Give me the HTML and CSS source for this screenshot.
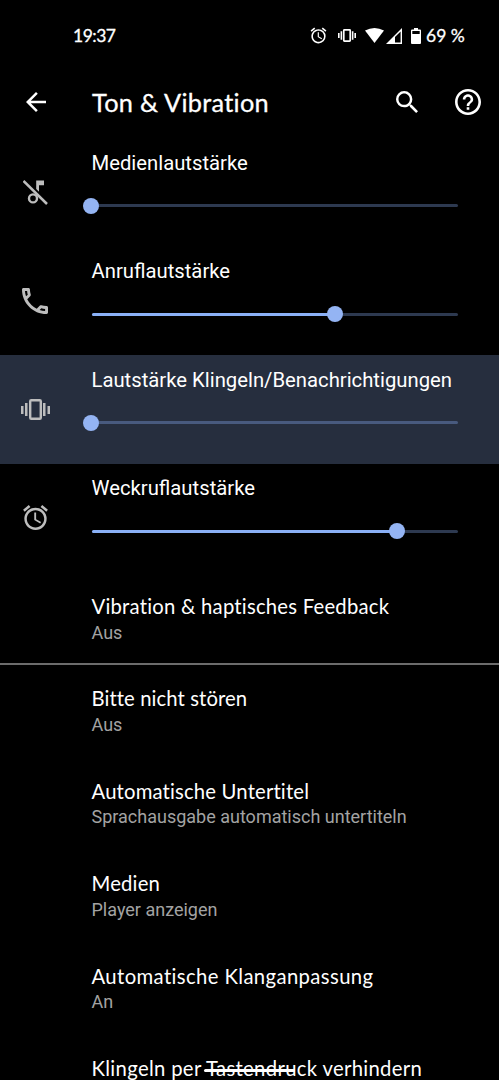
FILE: index.html
```html
<!DOCTYPE html>
<html lang="de">
<head>
<meta charset="utf-8">
<title>Ton &amp; Vibration</title>
<link rel="stylesheet" href="styles.css">
</head>
<body>
<div class="screen">
  <header class="status">
    <span class="clock">19:37</span>
    <div class="indicators">
      <svg class="st-alarm" viewBox="0 0 24 24"><path d="M22 5.72l-4.6-3.86-1.29 1.53 4.6 3.86L22 5.72zM7.88 3.39L6.6 1.86 2 5.71l1.29 1.53 4.59-3.85zM12.5 8H11v6l4.75 2.85.75-1.23-4-2.37V8zM12 4c-4.97 0-9 4.03-9 9s4.02 9 9 9a9 9 0 0 0 0-18zm0 16c-3.87 0-7-3.13-7-7s3.13-7 7-7 7 3.13 7 7-3.13 7-7 7z"/></svg>
      <svg class="st-vib" viewBox="0 0 28 20"><path d="M0 6h2.500v8H0zM4 3.500h2.500v13H4zM21.500 3.500H24v13h-2.500zM25.500 6H28v8h-2.500z"/><rect x="9" y="1.200" width="10" height="17.600" rx="1" fill="none" stroke="#fff" stroke-width="2.600"/></svg>
      <svg class="st-wifi" viewBox="0 0 19 15"><path d="M0 2.600Q9.500-2.600 19 2.600L9.500 15z"/></svg>
      <svg class="st-cell" viewBox="0 0 16 16"><path fill-rule="evenodd" d="M16 0v16H0zM14.600 3.400L9 9v5.600h5.600z"/></svg>
      <svg class="st-batt" viewBox="0 0 10 16"><path fill-rule="evenodd" d="M3 0h4v1.500h2q1 0 1 1V15q0 1-1 1H1q-1 0-1-1V2.500q0-1 1-1h2zM1.300 3v3h7.400V3z"/></svg>
      <span class="percent">69 %</span>
    </div>
  </header>
  <nav class="bar">
    <svg class="back" viewBox="4 4 16 16"><path d="M20 11H7.830l5.590-5.590L12 4l-8 8 8 8 1.410-1.410L7.830 13H20v-2z"/></svg>
    <h1 class="heading">Ton &amp; Vibration</h1>
    <svg class="search" viewBox="3 3 17.490 17.490"><path d="M15.500 14h-.79l-.28-.27A6.471 6.471 0 0 0 16 9.500 6.500 6.500 0 1 0 9.500 16c1.610 0 3.090-.59 4.230-1.570l.27.28v.79l5 4.990L20.490 19l-4.990-5zm-6 0C7.010 14 5 11.990 5 9.500S7.010 5 9.500 5 14 7.010 14 9.500 11.990 14 9.500 14z"/></svg>
    <svg class="help" viewBox="2 2 20 20"><path d="M11 18h2v-2h-2v2zm1-16C6.480 2 2 6.480 2 12s4.480 10 10 10 10-4.480 10-10S17.520 2 12 2zm0 18c-4.410 0-8-3.590-8-8s3.590-8 8-8 8 3.590 8 8-3.590 8-8 8zm0-14c-2.210 0-4 1.790-4 4h2c0-1.100.9-2 2-2s2 .9 2 2c0 2-3 1.750-3 5h2c0-2.250 3-2.500 3-5 0-2.210-1.790-4-4-4z"/></svg>
  </nav>
  <main>
    <section class="volume">
      <div class="icon"><svg class="ic-media" viewBox="0 0 25 25"><path d="M13.200 0.500H21v4.800h-5v6.500l-2.800-2.800z"/><circle cx="10" cy="18.400" r="4" fill="none" stroke="#bdbdbd" stroke-width="2.400"/><path d="M.500 1l23.500 23" stroke="#bdbdbd" stroke-width="2.500"/></svg></div>
      <div class="control"><div class="label">Medienlautstärke</div><div class="track"><i class="fill" style="width:0%"></i><i class="thumb" style="left:0%"></i></div></div>
    </section>
    <section class="volume">
      <div class="icon"><svg class="ic-phone" viewBox="3 3 18 18"><path fill-rule="evenodd" d="M6.540 5c.06.89.21 1.760.45 2.590l-1.200 1.200c-.41-1.200-.67-2.470-.76-3.790h1.510m9.860 12.020c.85.24 1.720.39 2.600.45v1.490c-1.320-.09-2.590-.35-3.800-.75l1.200-1.190M7.500 3H4c-.55 0-1 .45-1 1 0 9.390 7.610 17 17 17 .55 0 1-.45 1-1v-3.490c0-.55-.45-1-1-1-1.240 0-2.450-.2-3.570-.57a.84.84 0 0 0-.31-.05c-.26 0-.51.1-.71.29l-2.200 2.200a15.149 15.149 0 0 1-6.590-6.590l2.200-2.200c.28-.28.36-.67.25-1.020A11.360 11.360 0 0 1 8.500 4c0-.55-.45-1-1-1z"/></svg></div>
      <div class="control"><div class="label">Anruflautstärke</div><div class="track"><i class="fill" style="width:66.6%"></i><i class="thumb" style="left:66.6%"></i></div></div>
    </section>
    <section class="volume active">
      <div class="icon"><svg class="ic-vib" viewBox="0 0 29 21"><path d="M0 7h2.500v8H0zM4 4h2.500v13H4zM22 4h2.500v13H22zM26.500 7H29v8h-2.500z"/><rect x="9.200" y="1.200" width="10.600" height="18.600" rx="1" fill="none" stroke="#bdbdbd" stroke-width="2.400"/></svg></div>
      <div class="control"><div class="label">Lautstärke Klingeln/Benachrichtigungen</div><div class="track"><i class="fill" style="width:0%"></i><i class="thumb" style="left:0%"></i></div></div>
    </section>
    <section class="volume">
      <div class="icon"><svg class="ic-alarm" viewBox="2 1.860 20 20.140"><path d="M22 5.720l-4.600-3.860-1.290 1.530 4.600 3.860L22 5.720zM7.880 3.390L6.600 1.860 2 5.710l1.290 1.530 4.590-3.850zM12.500 8H11v6l4.750 2.850.75-1.230-4-2.370V8zM12 4c-4.970 0-9 4.030-9 9s4.020 9 9 9a9 9 0 0 0 0-18zm0 16c-3.870 0-7-3.130-7-7s3.130-7 7-7 7 3.130 7 7-3.130 7-7 7z"/></svg></div>
      <div class="control"><div class="label">Weckruflautstärke</div><div class="track"><i class="fill" style="width:83.4%"></i><i class="thumb" style="left:83.4%"></i></div></div>
    </section>
    <section class="item divided"><h2 class="haptics">Vibration &amp; haptisches Feedback</h2><p>Aus</p></section>
    <section class="item"><h2 class="dnd">Bitte nicht stören</h2><p>Aus</p></section>
    <section class="item"><h2 class="captions">Automatische Untertitel</h2><p>Sprachausgabe automatisch untertiteln</p></section>
    <section class="item"><h2 class="media">Medien</h2><p>Player anzeigen</p></section>
    <section class="item"><h2 class="adaptive">Automatische Klanganpassung</h2><p>An</p></section>
    <section class="item"><h2 class="prevent">Klingeln per Tastendruck verhindern</h2></section>
  </main>
  <div class="gesture"></div>
</div>
</body>
</html>
```
FILE: styles.css
```css
* { box-sizing: border-box; }
body { margin: 0; background: #000; }
.screen { position: relative; width: 499px; height: 1080px; overflow: hidden; background: #000; color: #fff; font-family: Roboto, sans-serif; }
svg { display: block; flex: none; fill: #fff; }
.status { height: 71px; padding: 0 33px 0 73px; display: flex; align-items: center; justify-content: space-between; font-family: Lato, sans-serif; font-size: 17.500px; -webkit-text-stroke: 0.300px #fff; }
.clock, .percent { white-space: nowrap; }
.clock { letter-spacing: -0.500px; }
.indicators { display: flex; align-items: center; }
.st-alarm { width: 19px; height: 19px; margin-right: 10px; }
.st-vib { width: 18px; height: 13px; margin-right: 9px; }
.st-wifi { width: 19px; height: 15px; margin-right: 2px; }
.st-cell { width: 16px; height: 16px; margin-right: 9px; }
.st-batt { width: 10px; height: 16px; margin-right: 5px; }
.percent { width: 40px; }
.bar { height: 67px; display: flex; align-items: center; padding: 0 18px 5px 26px; }
.back { width: 20px; height: 20px; }
.heading { margin: 0 auto 0 46px; font: 400 25.300px/34px Lato, sans-serif; letter-spacing: 0.280px; -webkit-text-stroke: 0.300px #fff; white-space: nowrap; }
.search { width: 22px; height: 22px; margin-right: 37px; }
.help { width: 26px; height: 26px; }
.volume { height: 108.500px; display: flex; }
.volume.active { background: #262e3e; }
.icon { width: 91.500px; height: 108px; padding-right: 21.500px; display: flex; align-items: center; justify-content: center; flex: none; }
.icon svg { fill: #bdbdbd; }
.ic-media { width: 25px; height: 25px; }
.ic-phone { width: 26px; height: 26px; }
.ic-vib { width: 29px; height: 21px; }
.ic-alarm { width: 25px; height: 25px; }
.control { width: 366.500px; padding-top: 12.800px; }
.label { height: 24px; font-size: 20.280px; line-height: 24px; white-space: nowrap; }
.track { position: relative; height: 3px; margin-top: 29.300px; border-radius: 2px; background: #2d3950; }
.active .track { background: #485a7e; }
.fill { display: block; height: 3px; border-radius: 2px; background: #8ab0f6; }
.thumb { position: absolute; top: -6.500px; width: 16px; height: 16px; margin-left: -8.300px; border-radius: 50%; background: #94b4f3; }
.item { height: 92.400px; padding: 21px 0 0 91.500px; white-space: nowrap; }
.divided { border-bottom: 2px solid #6c6c6c; height: 93.400px; }
.divided + .item { height: 91.400px; padding-top: 20px; }
.item h2 { margin: 0; font: 400 20.300px/26px Lato, sans-serif; }
.item p { margin: 1.500px 0 0; font-size: 18px; line-height: 24px; color: #a3a3a3; }
.item .haptics { letter-spacing: 0.220px; }
.item .dnd { letter-spacing: 0.090px; }
.item .captions { letter-spacing: 0.160px; }
.item .media { letter-spacing: 0.170px; }
.item .adaptive { letter-spacing: 0.380px; }
.item .prevent { letter-spacing: 0.320px; }
.gesture { position: absolute; left: 204px; top: 1069px; width: 91px; height: 3px; border-radius: 2px; background: #fff; }
```
